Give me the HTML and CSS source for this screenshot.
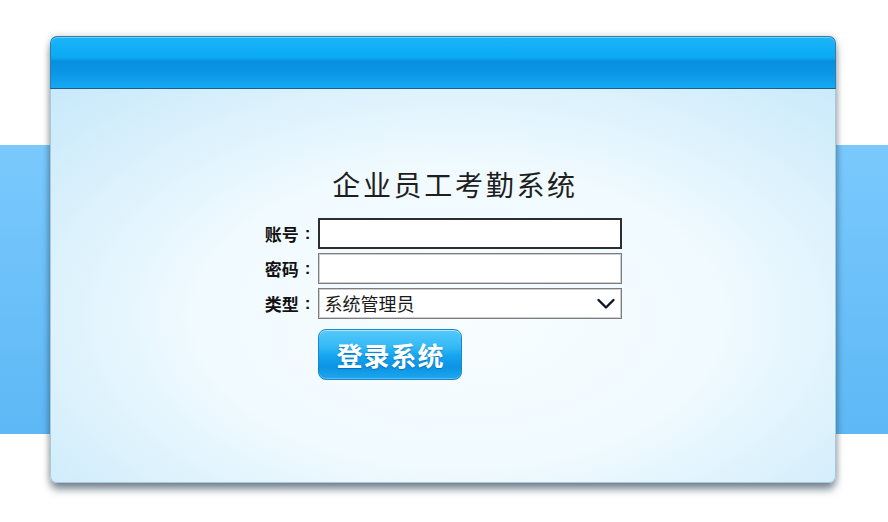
FILE: index.html
```html
<!DOCTYPE html>
<html lang="zh-CN">
<head>
<meta charset="utf-8">
<title>企业员工考勤系统</title>
<link rel="stylesheet" href="styles.css">
</head>
<body>
<div class="stage">
  <div class="panel">
    <div class="panel-head"></div>
    <div class="panel-body">
      <h1 class="title">企业员工考勤系统</h1>
      <form class="login-form">
        <label class="lbl" for="acc">账号<span class="colon">:</span></label>
        <input class="field field-focus" id="acc" type="text">
        <label class="lbl" for="pwd">密码<span class="colon">:</span></label>
        <input class="field" id="pwd" type="password">
        <label class="lbl" for="role">类型<span class="colon">:</span></label>
        <div class="select-wrap">
          <select class="field select" id="role">
            <option>系统管理员</option>
            <option>普通员工</option>
          </select>
          <svg class="chev" width="20" height="12" viewBox="0 0 20 12"><path d="M2.5 2 L10 9.5 L17.5 2" fill="none" stroke="#101426" stroke-width="2.4" stroke-linecap="round" stroke-linejoin="round"/></svg>
        </div>
        <span></span>
        <button class="btn" type="button">登录系统</button>
      </form>
    </div>
  </div>
</div>
</body>
</html>
```

FILE: styles.css
```css
html, body {
  margin: 0;
  padding: 0;
}
body {
  width: 888px;
  height: 522px;
  overflow: hidden;
  background: #ffffff;
  font-family: "Noto Sans CJK SC", "Noto Sans", sans-serif;
}
.stage {
  height: 522px;
  padding-top: 36px;
  box-sizing: border-box;
  background:
    linear-gradient(to bottom,
      #ffffff 0px, #ffffff 145px,
      #7ac9fd 145px, #5db8f5 434px,
      #ffffff 434px, #ffffff 522px);
}
.panel {
  margin-left: 50px;
  width: 786px;
  height: 447px;
  border-radius: 7px;
  display: flex;
  flex-direction: column;
  box-shadow: 0 7px 9px -1px rgba(30, 55, 75, 0.6), 0 0 7px rgba(0, 0, 0, 0.18);
}
.panel-head {
  height: 51px;
  flex: none;
  border-radius: 7px 7px 0 0;
  border: 1px solid #2c7fb3;
  border-bottom: 1px solid #1b5f8c;
  background: linear-gradient(to bottom,
    #1cb5f7 0%, #0aaaf3 40%, #078fdf 48%, #0a97e5 70%, #17a9f3 100%);
  box-shadow: inset 0 1px 0 rgba(255,255,255,0.35);
}
.panel-body {
  flex: 1;
  border-radius: 0 0 7px 7px;
  border: 1px solid #a9c8da;
  border-top: none;
  background: radial-gradient(ellipse 75% 85% at 52% 58%, #f8fdff 0%, #f0faff 45%, #d8f0fc 75%, #c6e8fa 100%);
  padding-top: 78px;
  box-sizing: border-box;
}
.title {
  margin: 0;
  text-align: center;
  font-size: 28px;
  line-height: 34px;
  font-weight: 400;
  letter-spacing: 2.7px;
  color: #1e1e1e;
  padding-left: 24px;
}
.login-form {
  margin-top: 17px;
  display: grid;
  grid-template-columns: 52px 304px;
  grid-auto-rows: 31px;
  column-gap: 3px;
  row-gap: 4px;
  justify-content: center;
  padding-right: 2px;
}
.lbl {
  font-size: 17px;
  font-weight: 700;
  color: #111;
  display: flex;
  align-items: center;
  justify-content: flex-end;
  white-space: nowrap;
}
.colon {
  margin-left: 6px;
  margin-right: 4px;
  font-family: "Liberation Sans", sans-serif;
}
.field {
  box-sizing: border-box;
  width: 304px;
  height: 31px;
  margin: 0;
  background: #fff;
  border: 1px solid #7d7d7d;
  box-shadow: inset 0 0 0 1px #cfcfcf;
  font-family: "Noto Sans CJK SC", sans-serif;
  font-size: 16px;
  color: #1a1a1a;
  outline: none;
  padding: 0 6px;
}
.field-focus {
  border: 2px solid #2e2e2e;
  box-shadow: none;
}
.select-wrap {
  position: relative;
}
.select {
  -webkit-appearance: none;
  appearance: none;
  padding-left: 6px;
  font-size: 18px;
  line-height: 29px;
}
.chev {
  position: absolute;
  right: 6px;
  top: 10px;
  pointer-events: none;
}
.btn {
  margin-top: 6px;
  width: 144px;
  height: 51px;
  border: 1px solid #1a86cc;
  border-radius: 8px;
  background: linear-gradient(to bottom,
    #56c9fa 0%, #33b9f6 35%, #16a5ef 52%, #0b94e3 75%, #1ea6ee 100%);
  box-shadow: inset 0 1px 0 rgba(255,255,255,0.55), inset 0 -1px 0 rgba(255,255,255,0.25);
  color: #ffffff;
  font-family: "Noto Sans CJK SC", sans-serif;
  font-size: 26px;
  font-weight: 700;
  letter-spacing: 1px;
  text-shadow: 0 1px 1px rgba(0, 60, 120, 0.45);
  padding: 0 0 0 2px;
  cursor: pointer;
}
```
